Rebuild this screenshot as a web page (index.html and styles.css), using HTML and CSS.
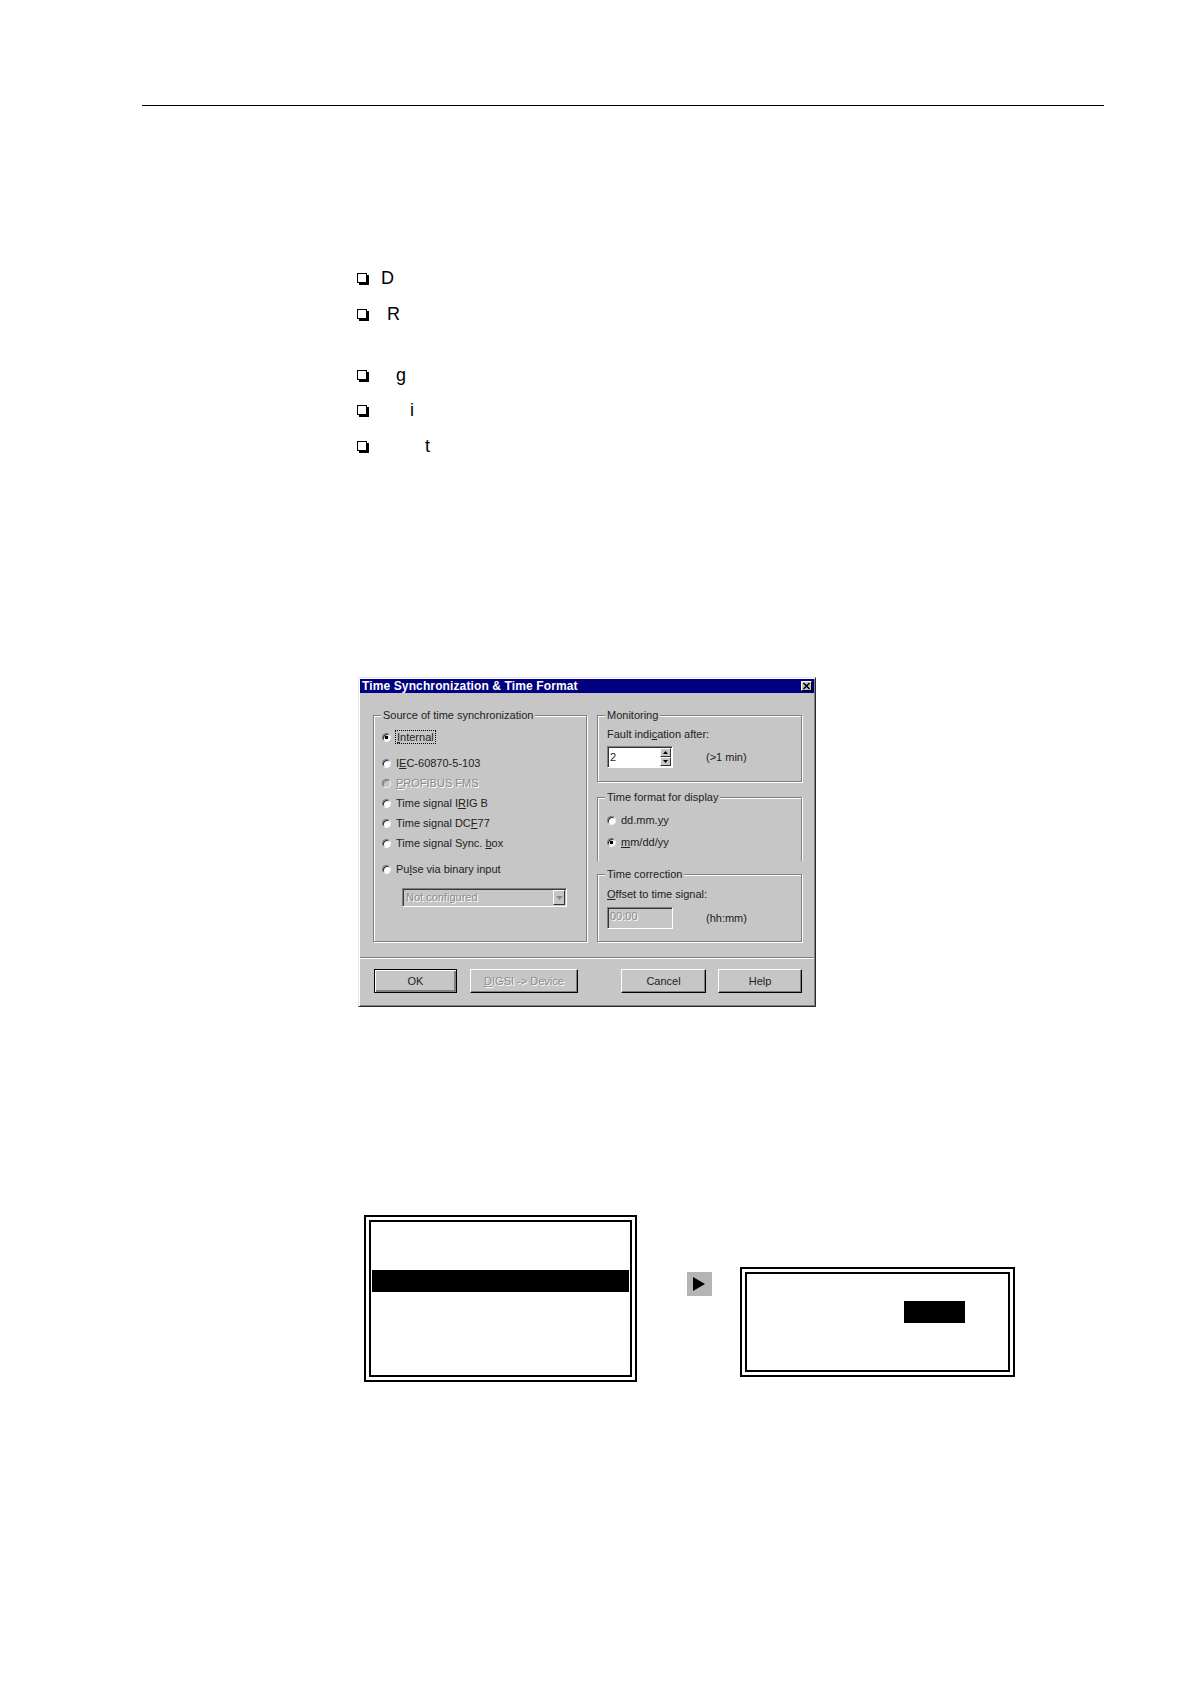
FILE: index.html
```html
<!DOCTYPE html>
<html>
<head>
<meta charset="utf-8">
<title>Time Synchronization</title>
<link rel="stylesheet" href="styles.css">
</head>
<body>
<div class="page">
  <div class="rule"></div>

  <ul class="bullets">
    <li class="item"><span class="box"></span><span class="letter l-d">D</span></li>
    <li class="item item-2"><span class="box"></span><span class="letter l-r">R</span></li>
    <li class="item item-3"><span class="box"></span><span class="letter l-g">g</span></li>
    <li class="item item-4"><span class="box"></span><span class="letter l-i">i</span></li>
    <li class="item item-5"><span class="box"></span><span class="letter l-t">t</span></li>
  </ul>

  <div class="dialog">
    <div class="titlebar">
      <span class="title">Time Synchronization &amp; Time Format</span>
      <span class="close"><svg width="9" height="8" viewBox="0 0 9 8"><path d="M1.5 1 L7.5 7 M7.5 1 L1.5 7" stroke="#000" stroke-width="1.6"/></svg></span>
    </div>

    <div class="dlg-content">
      <div class="group group-source">
        <span class="legend">Source of time synchronization</span>
        <div class="radio-row"><span class="radio checked"></span><span class="focus"><u>I</u>nternal</span></div>
        <div class="radio-row gap6"><span class="radio"></span><span>I<u>E</u>C-60870-5-103</span></div>
        <div class="radio-row disabled"><span class="radio"></span><span><u>P</u>ROFIBUS FMS</span></div>
        <div class="radio-row"><span class="radio"></span><span>Time signal I<u>R</u>IG B</span></div>
        <div class="radio-row"><span class="radio"></span><span>Time signal DC<u>F</u>77</span></div>
        <div class="radio-row"><span class="radio"></span><span>Time signal Sync. <u>b</u>ox</span></div>
        <div class="radio-row gap6"><span class="radio"></span><span>Pu<u>l</u>se via binary input</span></div>
        <div class="combo">
          <span class="combo-text">Not configured</span>
          <span class="combo-btn"><svg width="7" height="4" viewBox="0 0 7 4"><path d="M0 0 H7 L3.5 4 Z" fill="#8a8a8a"/></svg></span>
        </div>
      </div>

      <div class="right-col">
        <div class="group group-mon">
          <span class="legend">Monitoring</span>
          <div class="label-row">Fault indi<u>c</u>ation after:</div>
          <div class="field-row">
            <div class="spin">
              <span class="spin-value">2</span>
              <span class="spin-btns">
                <span class="spin-btn"><svg width="5" height="3" viewBox="0 0 5 3"><path d="M0 3 H5 L2.5 0 Z" fill="#000"/></svg></span>
                <span class="spin-btn"><svg width="5" height="3" viewBox="0 0 5 3"><path d="M0 0 H5 L2.5 3 Z" fill="#000"/></svg></span>
              </span>
            </div>
            <span class="unit">(&gt;1 min)</span>
          </div>
        </div>

        <div class="group group-fmt no-bottom">
          <span class="legend">Time format for display</span>
          <div class="radio-row"><span class="radio"></span><span>dd.mm.<u>y</u>y</span></div>
          <div class="radio-row gap2"><span class="radio checked"></span><span><u>m</u>m/dd/yy</span></div>
        </div>

        <div class="group group-corr">
          <span class="legend">Time correction</span>
          <div class="label-row"><u>O</u>ffset to time signal:</div>
          <div class="field-row field-gap">
            <div class="edit-disabled">00:00</div>
            <span class="unit">(hh:mm)</span>
          </div>
        </div>
      </div>
    </div>

    <div class="sep"></div>

    <div class="buttons">
      <div class="btn btn-default btn-ok">OK</div>
      <div class="btn btn-disabled btn-digsi"><span><u>D</u>IGSI -&gt; Device</span></div>
      <div class="btn btn-cancel">Cancel</div>
      <div class="btn btn-help">Help</div>
    </div>
  </div>

  <div class="lcd-row">
    <div class="lcd lcd-left">
      <div class="lcd-inner">
        <div class="lcd-bar"></div>
      </div>
    </div>
    <div class="arrow-btn">
      <svg width="25" height="24" viewBox="0 0 25 24"><path d="M6 5 L18 12 L6 19 Z" fill="#000"/></svg>
    </div>
    <div class="lcd lcd-right">
      <div class="lcd-inner">
        <div class="lcd-cursor"></div>
      </div>
    </div>
  </div>
</div>
</body>
</html>
```

FILE: styles.css
```css
* {
  box-sizing: border-box;
}

html,
body {
  margin: 0;
  padding: 0;
  background: #ffffff;
}

body {
  width: 1190px;
  height: 1682px;
  overflow: hidden;
  font-family: "Liberation Sans", Arial, sans-serif;
  color: #000;
}

.page {
  padding-top: 105px;
}

.rule {
  margin-left: 142px;
  width: 962px;
  height: 1px;
  background: #000;
}

/* ---------- bullet list ---------- */
.bullets {
  list-style: none;
  margin: 162px 0 0 357px;
  padding: 0;
}

.item {
  display: flex;
  align-items: center;
  height: 20px;
  font-size: 18px;
  line-height: 20px;
}

.item-2 { margin-top: 16px; }
.item-3 { margin-top: 41px; }
.item-4 { margin-top: 15px; }
.item-5 { margin-top: 16px; }

.box {
  flex: none;
  width: 10px;
  height: 10px;
  border: 1px solid #000;
  background: #fff;
  box-shadow: 2px 2px 0 #000;
}

.l-d { margin-left: 14px; }
.l-r { margin-left: 20px; }
.l-g { margin-left: 29px; }
.l-i { margin-left: 43px; }
.l-t { margin-left: 58px; }

/* ---------- dialog ---------- */
.dialog {
  margin: 221px 0 0 358px;
  width: 458px;
  background: #c6c6c6;
  border: 1px solid;
  border-color: #e6e6e6 #2a2a2a #2a2a2a #e6e6e6;
  box-shadow: inset 1px 1px 0 #ffffff, inset -1px -1px 0 #808080;
  padding: 1px;
  font-size: 11px;
  line-height: 13px;
  color: #222;
}

.titlebar {
  height: 14px;
  background: #000080;
  color: #fff;
  display: flex;
  align-items: center;
  justify-content: space-between;
  padding: 0 2px;
}

.title {
  font-weight: bold;
  font-size: 12px;
  line-height: 14px;
  letter-spacing: 0.12px;
}

.close {
  width: 11px;
  height: 10px;
  background: #c6c6c6;
  border: 1px solid;
  border-color: #fff #000 #000 #fff;
  display: flex;
  align-items: center;
  justify-content: center;
}

.close svg {
  display: block;
}

.dlg-content {
  display: flex;
  gap: 10px;
  padding: 22px 12px 1px 13px;
}

u {
  text-decoration: underline;
  text-underline-offset: 1px;
}

.group {
  position: relative;
  border: 1px solid #808080;
  box-shadow: inset 1px 1px 0 #fff, 1px 1px 0 #fff;
}

.no-bottom {
  border-bottom: 0;
  box-shadow: inset 1px 1px 0 #fff, 1px 0 0 #fff;
}

.legend {
  position: absolute;
  top: -7px;
  left: 7px;
  padding: 0 2px;
  background: #c6c6c6;
  line-height: 13px;
  white-space: nowrap;
}

.group-source {
  width: 214px;
  height: 227px;
  padding: 11px 0 0 8px;
}

.right-col {
  width: 205px;
  display: flex;
  flex-direction: column;
}

.radio-row {
  display: flex;
  align-items: center;
  height: 20px;
  white-space: nowrap;
}

.gap6 { margin-top: 6px; }
.gap2 { margin-top: 2px; }

.radio {
  flex: none;
  width: 9px;
  height: 9px;
  margin-right: 5px;
  border-radius: 50%;
  background: #fff;
  border: 1px solid;
  border-color: #7a7a7a #f0f0f0 #f0f0f0 #7a7a7a;
  box-shadow: inset 1px 1px 0 #2a2a2a;
}

.radio.checked {
  background: radial-gradient(circle at 50% 50%, #000 0 1.6px, #fff 2.1px);
}

.disabled {
  color: #8c8c8c;
  text-shadow: 1px 1px 0 #fff;
}

.disabled .radio {
  background: #c6c6c6;
  box-shadow: inset 1px 1px 0 #8c8c8c;
}

.focus {
  border: 1px dotted #000;
  padding: 0 1px;
  line-height: 12px;
  margin-left: -1px;
}

.combo {
  margin: 9px 0 0 20px;
  width: 165px;
  height: 19px;
  display: flex;
  align-items: center;
  justify-content: space-between;
  border: 1px solid;
  border-color: #808080 #fff #fff #808080;
  box-shadow: inset 1px 1px 0 #3a3a3a;
  padding: 0 1px 0 3px;
  background: #c6c6c6;
}

.combo-text {
  color: #8c8c8c;
  text-shadow: 1px 1px 0 #fff;
}

.combo-btn {
  width: 12px;
  height: 15px;
  display: flex;
  align-items: center;
  justify-content: center;
  border: 1px solid;
  border-color: #fff #333 #333 #fff;
  background: #c6c6c6;
}

.combo-btn svg {
  display: block;
}

.group-mon {
  height: 67px;
  padding: 11px 0 0 9px;
}

.group-fmt {
  margin-top: 15px;
  height: 64px;
  padding: 12px 0 0 9px;
}

.group-corr {
  margin-top: 13px;
  height: 68px;
  padding: 12px 0 0 9px;
}

.label-row {
  height: 14px;
  line-height: 14px;
  white-space: nowrap;
}

.field-row {
  display: flex;
  align-items: center;
  margin-top: 5px;
}

.field-gap {
  margin-top: 6px;
}

.spin {
  width: 66px;
  height: 22px;
  background: #fff;
  border: 1px solid;
  border-color: #808080 #fff #fff #808080;
  box-shadow: inset 1px 1px 0 #333;
  display: flex;
  align-items: stretch;
  justify-content: space-between;
  padding: 1px 1px 1px 2px;
}

.spin-value {
  line-height: 18px;
}

.spin-btns {
  width: 11px;
  display: flex;
  flex-direction: column;
}

.spin-btn {
  flex: 1;
  display: flex;
  align-items: center;
  justify-content: center;
  background: #c6c6c6;
  border: 1px solid;
  border-color: #fff #333 #333 #fff;
}

.spin-btn svg {
  display: block;
}

.unit {
  margin-left: 33px;
  white-space: nowrap;
}

.edit-disabled {
  width: 66px;
  height: 22px;
  background: #c6c6c6;
  border: 1px solid;
  border-color: #808080 #fff #fff #808080;
  box-shadow: inset 1px 1px 0 #333;
  padding: 2px 0 0 2px;
  color: #8c8c8c;
  text-shadow: 1px 1px 0 #fff;
  line-height: 13px;
}

.sep {
  margin-top: 14px;
  height: 2px;
  border-top: 1px solid #808080;
  border-bottom: 1px solid #fff;
}

.buttons {
  display: flex;
  padding: 10px 12px 12px 14px;
}

.btn {
  height: 24px;
  display: flex;
  align-items: center;
  justify-content: center;
  background: #c6c6c6;
  border: 1px solid;
  border-color: #fff #000 #000 #fff;
  box-shadow: inset -1px -1px 0 #808080;
  white-space: nowrap;
}

.btn-default {
  border: 1px solid #000;
  box-shadow: inset 1px 1px 0 #fff, inset -2px -2px 0 #808080;
}

.btn-disabled {
  color: #8c8c8c;
  text-shadow: 1px 1px 0 #fff;
}

.btn-ok { width: 83px; }
.btn-digsi { width: 108px; margin-left: 13px; }
.btn-cancel { width: 85px; margin-left: 43px; }
.btn-help { width: 84px; margin-left: 12px; }

/* ---------- LCD row ---------- */
.lcd-row {
  display: flex;
  align-items: flex-start;
  margin: 208px 0 0 364px;
}

.lcd {
  border: 2px solid #000;
  padding: 3px;
  background: #fff;
}

.lcd-inner {
  border: 2px solid #000;
  height: 100%;
  display: flex;
  flex-direction: column;
  align-items: flex-start;
}

.lcd-left {
  width: 273px;
  height: 167px;
}

.lcd-bar {
  margin: 48px 1px 0 1px;
  align-self: stretch;
  height: 22px;
  background: #000;
}

.arrow-btn {
  margin: 57px 0 0 50px;
  width: 25px;
  height: 24px;
  background: #b4b4b4;
}

.arrow-btn svg {
  display: block;
}

.lcd-right {
  margin: 52px 0 0 28px;
  width: 275px;
  height: 110px;
}

.lcd-cursor {
  margin: 27px 0 0 157px;
  width: 61px;
  height: 22px;
  background: #000;
}
```
